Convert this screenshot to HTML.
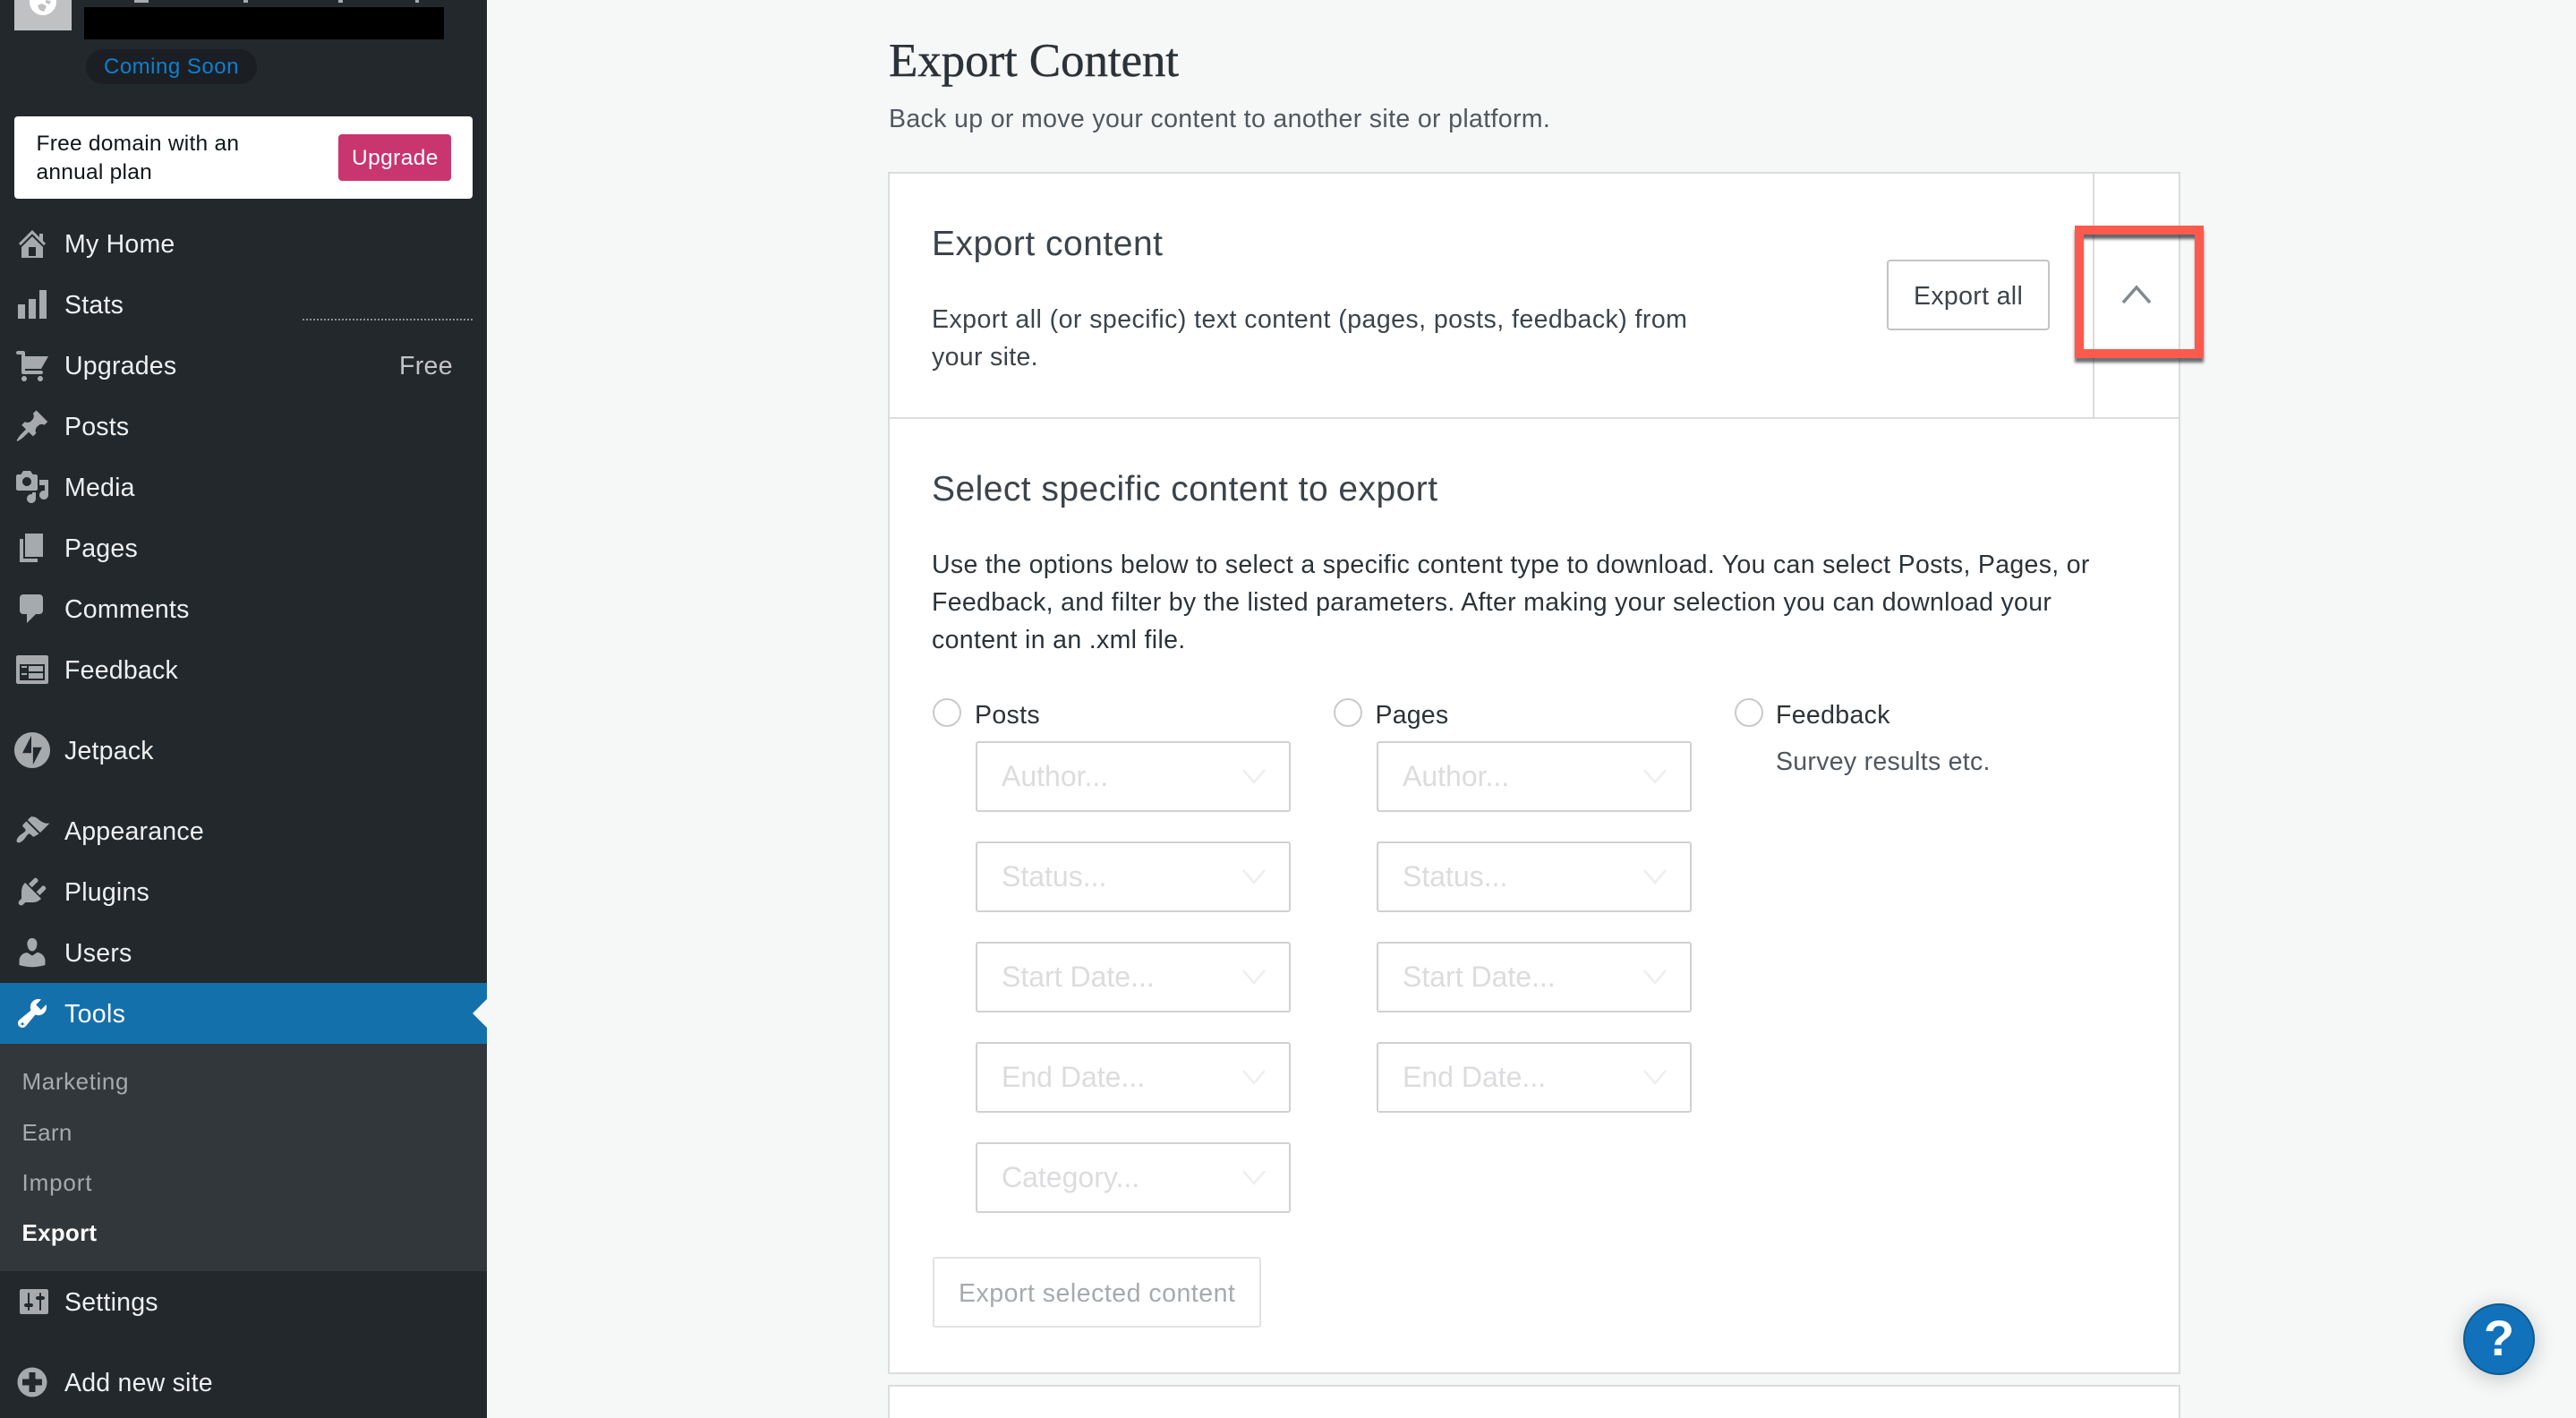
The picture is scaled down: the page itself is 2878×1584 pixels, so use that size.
<!DOCTYPE html>
<html lang="en"><head><meta charset="utf-8"><title>Export Content</title>
<style>
html,body{margin:0;padding:0;width:2878px;height:1584px;overflow:hidden;background:#f6f7f7;font-family:"Liberation Sans",sans-serif}
div,span,svg{position:absolute;box-sizing:border-box}
#root{left:0;top:0;width:2878px;height:1584px;overflow:hidden;background:#f6f7f7}
.t{white-space:nowrap;height:40px;line-height:40px;font-size:28.5px;letter-spacing:.33px;margin-top:1px}
#side{left:0;top:0;width:544px;height:1584px;background:#23282d}
.m{left:72px;color:#eef0f1;letter-spacing:.22px}
.i{left:16px;width:40px;height:40px;fill:#a7aaad}
.s{left:24.5px;font-size:26px;color:#a7aaad;letter-spacing:.6px}
.sel{width:352px;height:79px;background:#fff;border:2px solid #d0d1d2;border-radius:3px}
.sel span{left:27px;top:17px;white-space:nowrap;height:40px;line-height:40px;font-size:32px;color:#dcdcde;letter-spacing:0}
.sel svg{left:295px;top:27px;width:28px;height:20px;fill:none;stroke:#eeeeef;stroke-width:2.5}
.rad{width:32px;height:32px;border:2px solid #c9cacb;border-radius:50%;background:#fff}
.d{color:#3c434a}
</style></head><body>
<div id="root">
<div id="side">
<div style="left:16px;top:0;width:64px;height:34px;background:#c0c1c2;overflow:hidden">
<svg style="left:17px;top:-13px;width:30px;height:30px" viewBox="0 0 30 30"><circle cx="15" cy="15" r="15" fill="#fff"/><path d="M9 19l5-2 5 3-3 6-5-2zM18 13l6 1-2 4-4-2z" fill="#c0c1c2"/></svg></div>
<div style="left:150px;top:0;width:16px;height:3px;background:#aaa"></div>
<div style="left:272px;top:0;width:5px;height:3px;background:#aaa"></div>
<div style="left:378px;top:0;width:5px;height:3px;background:#aaa"></div>
<div style="left:464px;top:0;width:4px;height:3px;background:#aaa"></div>
<div style="left:94px;top:8px;width:402px;height:36px;background:#000"></div>
<div style="left:96px;top:55px;width:191px;height:39px;border-radius:20px;background:#1b1f23"></div>
<div class="t" style="left:116px;top:54px;font-size:24px;letter-spacing:.5px;color:#0e7fd0">Coming Soon</div>
<div style="left:16px;top:130px;width:512px;height:92px;border-radius:4px;background:#fff"></div>
<div class="t" style="left:40.5px;top:140px;font-size:24.5px;letter-spacing:.25px;color:#101517">Free domain with an</div>
<div class="t" style="left:40.5px;top:172px;font-size:24.5px;letter-spacing:.25px;color:#101517">annual plan</div>
<div style="left:378px;top:150px;width:126px;height:52px;border-radius:4px;background:#c9356e"></div>
<div class="t" style="left:393px;top:156px;font-size:24.5px;letter-spacing:.4px;color:#fff">Upgrade</div>

<div style="left:338px;top:356px;width:190px;height:0;border-top:2px dotted #8c8f94"></div>

<svg class="i" style="top:252px" viewBox="0 0 20 20"><path d="M16 8.5l1.53 1.53-1.06 1.06L10 4.62l-6.47 6.47-1.06-1.06L10 2.5l4 4v-2h2v4zm-6-2.46l6 5.99V18H4v-5.97zM12 17v-5H8v5h4z"/></svg>
<div class="t m" style="top:252px">My Home</div>
<svg class="i" style="top:320px" viewBox="0 0 20 20"><path d="M18 18V2h-4v16h4zm-6 0V7H8v11h4zm-6 0v-8H2v8h4z"/></svg>
<div class="t m" style="top:320px">Stats</div>
<svg class="i" style="top:388px" viewBox="0 0 20 20"><path d="M6 13h9c.55 0 1 .45 1 1s-.45 1-1 1H5c-.55 0-1-.45-1-1V4H2c-.55 0-1-.45-1-1s.45-1 1-1h3c.55 0 1 .45 1 1v2h13l-4 7H6v1zm-.5 3c.83 0 1.500.67 1.500 1.500S6.330 19 5.500 19 4 18.330 4 17.500 4.670 16 5.500 16zm9 0c.83 0 1.500.67 1.500 1.500s-.67 1.500-1.500 1.500-1.500-.67-1.500-1.500.67-1.500 1.500-1.500z"/></svg>
<div class="t m" style="top:388px">Upgrades</div>
<div class="t" style="left:446px;top:388px;color:#c3c4c7">Free</div>
<svg class="i" style="top:456px" viewBox="0 0 20 20"><path d="M10.44 3.02l1.82-1.82 6.36 6.35-1.83 1.82c-1.05-.68-2.48-.57-3.41.36l-.75.75c-.92.93-1.04 2.35-.35 3.41l-1.83 1.82-2.41-2.41-2.8 2.79c-.42.42-3.38 2.71-3.8 2.29s1.86-3.39 2.28-3.81l2.79-2.79L4.1 9.36l1.83-1.82c1.05.69 2.48.57 3.4-.36l.75-.75c.93-.92 1.05-2.35.36-3.41z"/></svg>
<div class="t m" style="top:456px">Posts</div>
<svg class="i" style="top:524px" viewBox="0 0 20 20"><path fill-rule="evenodd" d="M13 11V4c0-.55-.45-1-1-1h-1.67L9 1H5L3.67 3H2c-.55 0-1 .45-1 1v7c0 .55.45 1 1 1h10c.55 0 1-.45 1-1zM7 4.500c1.380 0 2.500 1.120 2.500 2.500S8.380 9.500 7 9.500 4.500 8.380 4.500 7 5.620 4.500 7 4.500zM14 6h5v8.500c0 1.380-1.120 2.500-2.500 2.500S14 15.880 14 14.500s1.120-2.500 2.500-2.500c.17 0 .34.020.5.050V9h-3V6zm-4 8.050V13h2v3.500c0 1.380-1.120 2.500-2.500 2.500S7 17.880 7 16.500 8.120 14 9.500 14c.17 0 .34.020.5.050z"/></svg>
<div class="t m" style="top:524px">Media</div>
<svg class="i" style="top:592px" viewBox="0 0 20 20"><path d="M6 15V2h10v13H6zm-1 1h8v2H3V5h2v11z"/></svg>
<div class="t m" style="top:592px">Pages</div>
<svg class="i" style="top:660px" viewBox="0 0 20 20"><path d="M5 2h9c1.100 0 2 .9 2 2v7c0 1.100-.9 2-2 2h-2l-5 5v-5H5c-1.100 0-2-.9-2-2V4c0-1.100.9-2 2-2z"/></svg>
<div class="t m" style="top:660px">Comments</div>
<svg class="i" style="top:728px" viewBox="0 0 20 20"><path fill-rule="evenodd" d="M2 2h16c.55 0 1 .45 1 1v14c0 .55-.45 1-1 1H2c-.55 0-1-.45-1-1V3c0-.55.45-1 1-1zm15 14V7H3v9h14zM4 8v1h3V8H4zm4 0v3h8V8H8zm-4 4v1h3v-1H4zm4 0v3h8v-3H8z"/></svg>
<div class="t m" style="top:728px">Feedback</div>
<svg class="i" style="top:818px" viewBox="0 0 32 32"><path fill-rule="evenodd" d="M16 0C7.200 0 0 7.200 0 16s7.200 16 16 16 16-7.200 16-16S24.800 0 16 0zm-.8 18.600H7.200l8-15.600v15.600zm1.500 10.400V13.400h8l-8 15.600z"/></svg>
<div class="t m" style="top:818px">Jetpack</div>
<svg class="i" style="top:908px" viewBox="0 0 20 20"><path d="M14.480 11.060L7.410 3.990l1.500-1.500c.5-.56 2.300-.47 3.510.32 1.210.8 1.430 1.280 2.910 2.100 1.180.64 2.450 1.260 4.450.85zM13.770 11.770L6.700 4.700 4.930 6.470c-.39.39-.39 1.020 0 1.410l1.060 1.060c.39.39.39 1.030 0 1.420-.6.6-1.430 1.110-2.210 1.690-.35.26-.7.53-1.010.84-1.430 1.430-1.800 2.900-1.200 3.500.6.6 2.070.23 3.500-1.200.31-.31.58-.66.84-1.010.58-.78 1.090-1.610 1.690-2.210.39-.39 1.030-.39 1.420 0l1.060 1.060c.39.39 1.020.39 1.410 0z"/></svg>
<div class="t m" style="top:908px">Appearance</div>
<svg class="i" style="top:976px" viewBox="0 0 20 20"><path d="M13.110 4.360L9.870 7.600 8 5.730l3.240-3.240c.35-.34 1.050-.2 1.560.32.52.51.66 1.210.31 1.550zm-8 1.770l.91-1.120 9.010 9.010-1.190.84c-.71.71-2.630 1.160-3.820 1.160H6.140L4.900 17.260c-.59.59-1.540.59-2.120 0-.59-.58-.59-1.530 0-2.120l1.240-1.240v-3.880c0-1.130.4-3.050 1.090-3.890zm7.260 3.970l3.240-3.240c.34-.35 1.040-.21 1.550.31.52.51.66 1.210.31 1.550l-3.240 3.250z"/></svg>
<div class="t m" style="top:976px">Plugins</div>
<svg class="i" style="top:1044px" viewBox="0 0 20 20"><path d="M10 9.250c-2.270 0-2.730-3.440-2.730-3.440C7 4.020 7.820 2 9.970 2c2.160 0 2.980 2.020 2.710 3.810 0 0-.41 3.440-2.680 3.440zm0 2.570L12.720 10c2.390 0 4.520 2.330 4.520 4.530v2.490s-3.650 1.130-7.240 1.130c-3.650 0-7.240-1.130-7.240-1.130v-2.490c0-2.250 1.940-4.480 4.470-4.480z"/></svg>
<div class="t m" style="top:1044px">Users</div>

<div style="left:0;top:1098px;width:544px;height:68px;background:#1470aa"></div>
<svg style="left:528px;top:1116px;width:16px;height:32px" viewBox="0 0 16 32"><path d="M16 0L0 16l16 16z" fill="#f6f7f7"/></svg>
<svg class="i" style="top:1112px;fill:#fff" viewBox="0 0 20 20"><path fill-rule="evenodd" d="M16.680 9.770c-1.340 1.340-3.300 1.670-4.950.99l-5.410 6.520c-.99.99-2.590.99-3.570 0-.99-.98-.99-2.580 0-3.570l6.520-5.420c-.68-1.650-.35-3.610.99-4.950 1.280-1.280 3.120-1.620 4.720-1.060l-2.890 2.890 2.820 2.820 2.860-2.870c.53 1.580.18 3.390-1.090 4.660zm-12.690 6.640c.3.3.78.3 1.070 0 .3-.29.3-.77 0-1.060-.29-.3-.77-.3-1.070 0-.29.29-.29.77 0 1.060z"/></svg>
<div class="t m" style="top:1112px;color:#fff;letter-spacing:.35px">Tools</div>

<div style="left:0;top:1166px;width:544px;height:254px;background:#32373c"></div>
<div class="t s" style="top:1187px">Marketing</div>
<div class="t s" style="top:1244px;letter-spacing:.3px">Earn</div>
<div class="t s" style="top:1300px;letter-spacing:.85px">Import</div>
<div class="t s" style="top:1356px;color:#fff;font-weight:700;letter-spacing:.25px">Export</div>

<svg class="i" style="top:1434px" viewBox="0 0 20 20"><path fill-rule="evenodd" d="M19 16V4c0-.55-.45-1-1-1H4c-.55 0-1 .45-1 1v12c0 .55.45 1 1 1h14c.55 0 1-.45 1-1zM8.500 11h1c.55 0 1 .45 1 1s-.45 1-1 1h-1v1.500c0 .28-.22.5-.5.5s-.5-.22-.5-.5V13h-1c-.55 0-1-.45-1-1s.45-1 1-1h1V5.500c0-.28.22-.5.5-.5s.5.22.5.5V11zm5.500-2h-1c-.55 0-1-.45-1-1s.45-1 1-1h1V5.500c0-.28.22-.5.5-.5s.5.22.5.5V7h1c.55 0 1 .45 1 1s-.45 1-1 1h-1v5.500c0 .28-.22.5-.5.5s-.5-.22-.5-.5V9z"/></svg>
<div class="t m" style="top:1434px">Settings</div>
<svg class="i" style="top:1524px" viewBox="0 0 40 40"><circle cx="20" cy="20" r="16.500"/><path d="M16.500 9h7v7.500H31v7h-7.500V31h-7v-7.500H9v-7h7.500z" fill="#23282d"/></svg>
<div class="t m" style="top:1524px">Add new site</div>
</div>

<div class="t" style="left:993px;top:40px;height:54px;line-height:54px;font-family:'Liberation Serif',serif;font-size:53px;letter-spacing:-.1px;color:#2c3338;-webkit-text-stroke:.4px #2c3338">Export Content</div>
<div class="t" style="left:993px;top:112px;letter-spacing:.35px;color:#50575e">Back up or move your content to another site or platform.</div>

<div style="left:992px;top:192px;width:1444px;height:1343px;background:#fff;border:2px solid #dcdcde"></div>
<div style="left:992px;top:466px;width:1444px;height:2px;background:#dcdcde"></div>
<div style="left:2338px;top:192px;width:2px;height:276px;background:#dcdcde"></div>
<div style="left:992px;top:1547px;width:1444px;height:37px;background:#fff;border:2px solid #dcdcde;border-bottom:0"></div>

<div class="t d" style="left:1041px;top:252px;font-size:39px;letter-spacing:.5px">Export content</div>
<div class="t d" style="left:1041px;top:336px;letter-spacing:.45px">Export all (or specific) text content (pages, posts, feedback) from</div>
<div class="t d" style="left:1041px;top:378px">your site.</div>

<div style="left:2108px;top:290px;width:182px;height:79px;border:2px solid #c3c4c7;border-radius:4px;background:#fff"></div>
<div class="t d" style="left:2138px;top:310px">Export all</div>

<div class="t d" style="left:1041px;top:526px;font-size:39px;letter-spacing:.45px">Select specific content to export</div>
<div class="t d" style="left:1041px;top:610px;letter-spacing:.31px;color:#2c3338">Use the options below to select a specific content type to download. You can select Posts, Pages, or</div>
<div class="t d" style="left:1041px;top:652px;letter-spacing:.31px;color:#2c3338">Feedback, and filter by the listed parameters. After making your selection you can download your</div>
<div class="t d" style="left:1041px;top:694px;color:#2c3338">content in an .xml file.</div>

<div class="rad" style="left:1042px;top:780px"></div>
<div class="t" style="left:1089px;top:778px;color:#2c3338">Posts</div>
<div class="rad" style="left:1490px;top:780px"></div>
<div class="t" style="left:1536.5px;top:778px;letter-spacing:.2px;color:#2c3338">Pages</div>
<div class="rad" style="left:1938px;top:780px"></div>
<div class="t" style="left:1984px;top:778px;color:#2c3338">Feedback</div>
<div class="t" style="left:1984px;top:830px;letter-spacing:.28px;color:#50575e">Survey results etc.</div>

<div class="sel" style="left:1090px;top:828px"><span>Author...</span><svg viewBox="0 0 28 20"><path d="M2 3l12 14L26 3"/></svg></div>
<div class="sel" style="left:1090px;top:940px"><span>Status...</span><svg viewBox="0 0 28 20"><path d="M2 3l12 14L26 3"/></svg></div>
<div class="sel" style="left:1090px;top:1052px"><span>Start Date...</span><svg viewBox="0 0 28 20"><path d="M2 3l12 14L26 3"/></svg></div>
<div class="sel" style="left:1090px;top:1164px"><span>End Date...</span><svg viewBox="0 0 28 20"><path d="M2 3l12 14L26 3"/></svg></div>
<div class="sel" style="left:1090px;top:1276px"><span>Category...</span><svg viewBox="0 0 28 20"><path d="M2 3l12 14L26 3"/></svg></div>
<div class="sel" style="left:1538px;top:828px"><span>Author...</span><svg viewBox="0 0 28 20"><path d="M2 3l12 14L26 3"/></svg></div>
<div class="sel" style="left:1538px;top:940px"><span>Status...</span><svg viewBox="0 0 28 20"><path d="M2 3l12 14L26 3"/></svg></div>
<div class="sel" style="left:1538px;top:1052px"><span>Start Date...</span><svg viewBox="0 0 28 20"><path d="M2 3l12 14L26 3"/></svg></div>
<div class="sel" style="left:1538px;top:1164px"><span>End Date...</span><svg viewBox="0 0 28 20"><path d="M2 3l12 14L26 3"/></svg></div>

<div style="left:1042px;top:1404px;width:367px;height:79px;border:2px solid #e1e2e3;border-radius:3px;background:#fff"></div>
<div class="t" style="left:1071px;top:1424px;letter-spacing:.5px;color:#a7aaad">Export selected content</div>

<svg style="left:2370px;top:318px;width:34px;height:22px" viewBox="0 0 34 22"><path d="M2 20L17 3l15 17" fill="none" stroke="#7f8a8f" stroke-width="3.500"/></svg>

<div style="left:2318px;top:252px;width:144px;height:148px;border:10px solid #fd5a4e;box-shadow:0 5px 3px rgba(30,35,40,.65),inset 0 6px 3px -1px rgba(30,35,40,.7)"></div>

<div style="left:2752px;top:1456px;width:80px;height:80px;border-radius:50%;background:#1172bb;border:2px solid #0d5a90;box-shadow:0 4px 24px rgba(0,0,0,.2)"></div>
<div style="left:2752px;top:1456px;width:80px;height:80px;line-height:78px;text-align:center;font-size:56px;font-weight:700;color:#fff">?</div>
</div>
</body></html>
